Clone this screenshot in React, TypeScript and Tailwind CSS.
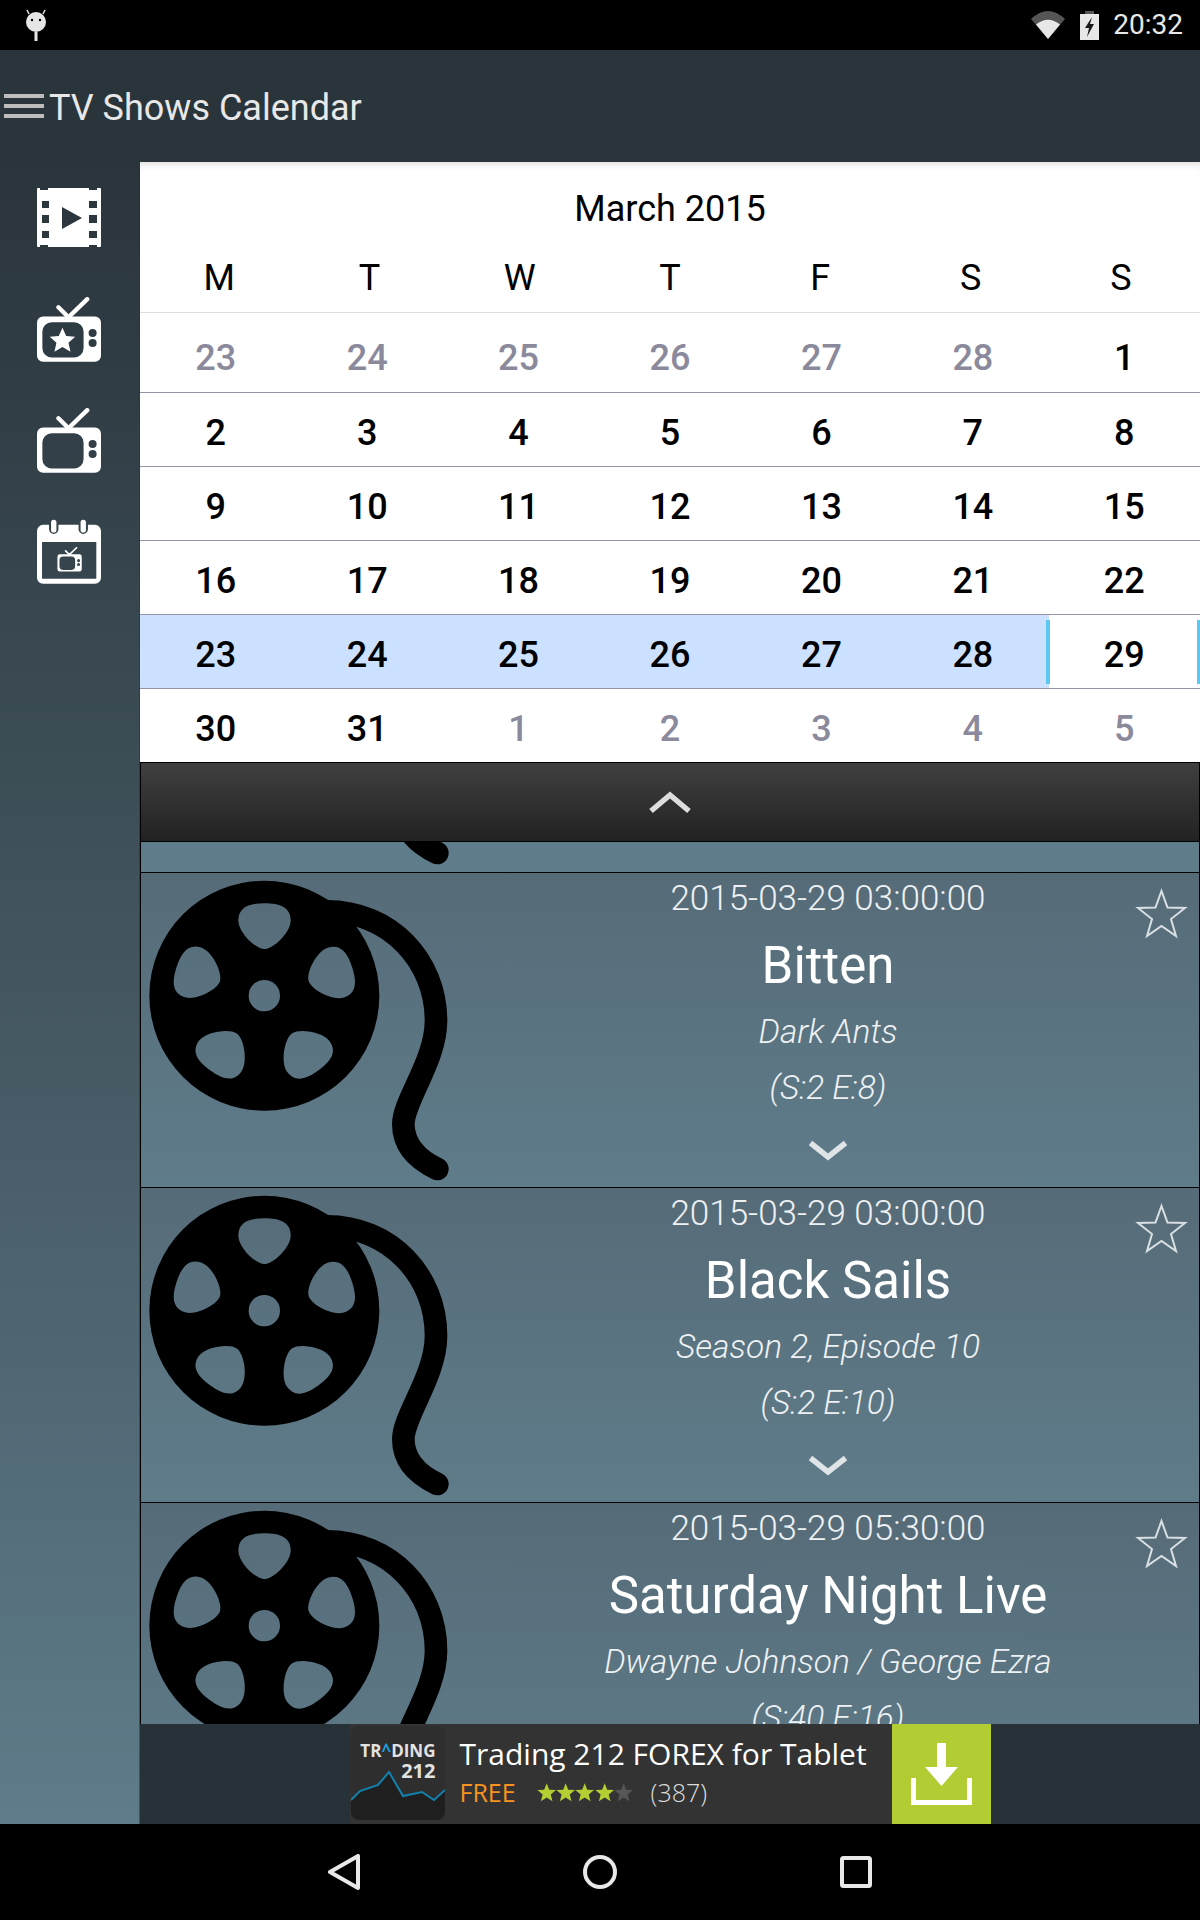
const tvBody =
  "M18 58H173a18 18 0 0 1 18 18V175a18 18 0 0 1-18 18H18a18 18 0 0 1-18-18V76a18 18 0 0 1 18-18Z";
const tvScreen =
  "M44 75H111a28 28 0 0 1 28 28V152a28 28 0 0 1-28 28H44a28 28 0 0 1-28-28V103a28 28 0 0 1 28-28Z";
const tvButtons = "M154 107a12 12 0 1 0 24 0a12 12 0 1 0-24 0ZM154 137a12 12 0 1 0 24 0a12 12 0 1 0-24 0Z";

const weekDays = ["M", "T", "W", "T", "F", "S", "S"];

const weeks = [
  [23, 24, 25, 26, 27, 28, 1],
  [2, 3, 4, 5, 6, 7, 8],
  [9, 10, 11, 12, 13, 14, 15],
  [16, 17, 18, 19, 20, 21, 22],
  [23, 24, 25, 26, 27, 28, 29],
  [30, 31, 1, 2, 3, 4, 5],
];

const shows = [
  { date: "2015-03-29 03:00:00", title: "Bitten", sub: "Dark Ants", ep: "(S:2 E:8)" },
  { date: "2015-03-29 03:00:00", title: "Black Sails", sub: "Season 2, Episode 10", ep: "(S:2 E:10)" },
  { date: "2015-03-29 05:30:00", title: "Saturday Night Live", sub: "Dwayne Johnson / George Ezra", ep: "(S:40 E:16)" },
];

function TvShape() {
  return (
    <>
      <path d={tvBody + tvScreen + tvButtons} fill="#fff" fillRule="evenodd" />
      <path d="M94 60L64 30M94 60L150 6" stroke="#fff" strokeWidth="13" strokeLinecap="round" fill="none" />
    </>
  );
}

function FilmIcon() {
  return (
    <svg width="64" height="59" viewBox="0 0 64 59">
      <path
        fillRule="evenodd"
        fill="#fff"
        d="M1 0H3V2H11V0H52V2H60V0H63Q64 0 64 1V58Q64 59 63 59H60V57H52V59H11V57H3V59H1Q0 59 0 58V1Q0 0 1 0ZM5 13V20H12V13ZM5 27V35H12V27ZM5 43V50H12V43ZM52 13V20H60V13ZM52 27V35H60V27ZM52 43V50H60V43ZM25 19V41L45 30Z"
      />
    </svg>
  );
}

function TvStarIcon() {
  return (
    <svg width="64" height="65" viewBox="0 0 191 193">
      <TvShape />
      <polygon
        fill="#fff"
        points="76,91 87,116 114,118 94,136 100,163 76,149 52,163 58,136 38,118 65,116"
      />
    </svg>
  );
}

function TvIcon() {
  return (
    <svg width="64" height="65" viewBox="0 0 191 193">
      <TvShape />
    </svg>
  );
}

function CalendarTvIcon() {
  return (
    <svg width="64" height="65" viewBox="0 0 191 193">
      <path
        fillRule="evenodd"
        fill="#fff"
        d="M18 17H173a18 18 0 0 1 18 18V175a18 18 0 0 1-18 18H18a18 18 0 0 1-18-18V35a18 18 0 0 1 18-18ZM15 68V178H177V68ZM36 17V30a14 14 0 0 0 28 0V17ZM124 17V30a14 14 0 0 0 28 0V17Z"
      />
      <rect x="42" y="2" width="16" height="38" rx="8" fill="#fff" />
      <rect x="130" y="2" width="16" height="38" rx="8" fill="#fff" />
      <g transform="translate(61 83) scale(0.38)">
        <TvShape />
      </g>
    </svg>
  );
}

function Reel() {
  const hole =
    "M403 428C450 428 482 440 482 480C482 515 430 565 403 565C376 565 325 515 325 480C325 440 356 428 403 428Z";
  return (
    <svg width="320" height="315" viewBox="33 337 960 945" className="shrink-0">
      <mask id="reel-holes" maskUnits="userSpaceOnUse" x="33" y="337" width="960" height="945">
        <rect x="33" y="337" width="960" height="945" fill="#fff" />
        {[0, 72, 144, 216, 288].map((deg) => (
          <path key={deg} d={hole} fill="#000" transform={`rotate(${deg} 403 705)`} />
        ))}
        <circle cx="403" cy="705" r="47" fill="#000" />
      </mask>
      <circle cx="403" cy="705" r="345" fill="#000" mask="url(#reel-holes)" />
      <path
        d="M590 452C780 452 918 600 918 780C918 900 820 1020 820 1090C820 1160 870 1200 922 1225"
        fill="none"
        stroke="#000"
        strokeWidth="68"
        strokeLinecap="round"
      />
    </svg>
  );
}

function ShowRow({ show }: { show: (typeof shows)[number] }) {
  return (
    <div className="relative flex h-[315px] shrink-0 border-b border-black bg-gradient-to-b from-[#566b78] to-[#5f7c8a] text-white">
      <Reel />
      <div className="flex min-w-0 flex-1 flex-col items-center pt-[6px] pr-[4px]">
        <p className="h-[40px] text-[35px] leading-[40px] font-light whitespace-nowrap text-[#eef1f3]">{show.date}</p>
        <p className="mt-[17px] h-[60px] text-[51px] leading-[60px] whitespace-nowrap">{show.title}</p>
        <p className="mt-[16px] h-[40px] text-[33.5px] leading-[40px] font-light whitespace-nowrap text-[#eef1f3] italic">
          {show.sub}
        </p>
        <p className="mt-[16px] h-[40px] text-[33.5px] leading-[40px] font-light whitespace-nowrap text-[#eef1f3] italic">
          {show.ep}
        </p>
        <svg width="40" height="24" viewBox="0 0 40 24" className="mt-[31px]">
          <path d="M2.5 4L20 18L37.5 4" fill="none" stroke="#dfe4e7" strokeWidth="5.5" />
        </svg>
      </div>
      <svg width="53" height="51" viewBox="0 0 53 51" className="absolute top-[15px] right-[11px]">
        <polygon
          points="26.5,3 32.5,19.5 50,20 36,31 41,48 26.5,38 12,48 17,31 3,20 20.5,19.5"
          fill="none"
          stroke="#d9e0e4"
          strokeWidth="2"
        />
      </svg>
    </div>
  );
}

function AdLogo() {
  return (
    <div className="relative my-[2px] ml-px h-[94px] w-[94px] shrink-0 overflow-hidden rounded-lg bg-[#2e2e2e]">
      <svg width="94" height="94" viewBox="0 0 94 94" className="absolute inset-0">
        <path d="M0 74L9 65L27 59L38 46L52 70L71 66L83 74L94 64V94H0Z" fill="#1f1f1f" />
        <path d="M0 74L9 65L27 59L38 46L52 70L71 66L83 74L94 64" fill="none" stroke="#1280ad" strokeWidth="2" />
      </svg>
      <p className="absolute top-[17px] right-[9px] text-[17px] leading-[16px] font-bold whitespace-nowrap text-[#e2e2e2]">
        TR<span className="text-[#1a9fd8]">^</span>DING
      </p>
      <p className="absolute top-[36px] right-[9px] text-[20px] leading-[18px] font-bold text-[#e2e2e2]">212</p>
    </div>
  );
}

function AdStars() {
  return (
    <div className="flex">
      {[0, 1, 2, 3, 4].map((i) => (
        <svg key={i} width="19.4" height="19" viewBox="0 0 20 19">
          <polygon
            points="10,0 12.6,6.6 19.6,7 14.2,11.5 16,18.5 10,14.7 4,18.5 5.8,11.5 0.4,7 7.4,6.6"
            fill={i < 4 ? "#b4cf33" : "#565656"}
          />
        </svg>
      ))}
    </div>
  );
}

export default function App() {
  return (
    <div className="flex h-[1920px] w-[1200px] flex-col overflow-hidden bg-black font-[Roboto,sans-serif]">
      {/* status bar */}
      <div className="flex h-[50px] shrink-0 items-center justify-between bg-black pr-[17px] pl-[25px]">
        <svg width="22" height="32" viewBox="0 0 22 32">
          <circle cx="11" cy="13" r="10" fill="#e6e6e6" />
          <path d="M4 5L2 1M18 5L20 1" stroke="#e6e6e6" strokeWidth="1.5" />
          <circle cx="7" cy="11" r="1.2" fill="#000" />
          <circle cx="15" cy="11" r="1.2" fill="#000" />
          <rect x="9.5" y="23" width="3" height="9" fill="#e6e6e6" />
        </svg>
        <div className="flex items-center">
          <svg width="34" height="28" viewBox="0 0 34 28">
            <path d="M17 28L0 8Q17 -8 34 8Z" fill="#555" />
            <path d="M17 28L5 13.5Q17 4 29 13.5Z" fill="#e8e8e8" />
          </svg>
          <svg width="19" height="29" viewBox="0 0 19 29" className="ml-[15px]">
            <path d="M5 0H14V3H19V29H0V3H5Z" fill="#e8e8e8" />
            <path d="M5 0H14V3H5Z" fill="#555" />
            <path d="M12 6L5 17H9L7 26L14 13H10Z" fill="#1a1a1a" />
          </svg>
          <span className="ml-[14px] text-[28px] leading-none text-[#e8e8e8]">20:32</span>
        </div>
      </div>

      {/* app bar */}
      <div className="flex h-[112px] shrink-0 items-center bg-[#2a343b] pl-[4px]">
        <div className="flex w-[40px] flex-col gap-[6px]">
          <div className="h-[4px] bg-[#bdbdbd]" />
          <div className="h-[4px] bg-[#bdbdbd]" />
          <div className="h-[4px] bg-[#bdbdbd]" />
        </div>
        <h1 className="ml-[5px] pt-[4px] text-[36px] leading-none font-normal text-[#e8e8e8]">TV Shows Calendar</h1>
      </div>

      <div className="flex min-h-0 flex-1">
        {/* side menu */}
        <aside className="flex w-[140px] shrink-0 flex-col items-center gap-[46px] border-r border-[#26303680] bg-gradient-to-b from-[#2a343b] to-[#5f7c8a] pt-[26px] pr-[2px]">
          <FilmIcon />
          <div className="mt-[4px]">
            <TvStarIcon />
          </div>
          <TvIcon />
          <CalendarTvIcon />
        </aside>

        <main className="flex min-w-0 flex-1 flex-col">
          {/* calendar */}
          <section className="h-[600px] shrink-0 bg-white text-black shadow-[inset_0_8px_8px_-7px_rgba(0,0,0,0.18)]">
            <p className="h-[94px] pt-[27px] text-center text-[36px] leading-[40px]">March 2015</p>
            <div className="grid h-[57px] grid-cols-7 border-b border-[#dddddd] px-[4px]">
              {weekDays.map((d, i) => (
                <span key={i} className="text-center text-[36px] leading-[44px]">
                  {d}
                </span>
              ))}
            </div>
            {weeks.map((week, w) => (
              <div
                key={w}
                className={
                  w === 0
                    ? "grid h-[79px] grid-cols-7"
                    : "grid h-[74px] grid-cols-7 border-t border-[#9593a5]"
                }
              >
                {week.map((day, i) => {
                  const muted = (w === 0 && i < 6) || (w === 5 && i > 1);
                  const selected = w === 4 && i < 6;
                  const today = w === 4 && i === 6;
                  return (
                    <div
                      key={i}
                      className={
                        "relative flex items-center justify-center text-[36px] leading-none font-medium " +
                        (w === 0 ? "pt-[10px] " : "pt-[6px] ") +
                        (muted ? "text-[#8b899c] " : "text-black ") +
                        (selected ? "bg-[#cce0ff] " : "")
                      }
                    >
                      {day}
                      {today && (
                        <>
                          <div className="absolute top-[5px] bottom-[4px] -left-[3px] w-[4px] bg-[#5ac8f0]" />
                          <div className="absolute top-[5px] right-0 bottom-[4px] w-[3px] bg-[#5ac8f0]" />
                        </>
                      )}
                    </div>
                  );
                })}
              </div>
            ))}
          </section>

          {/* collapse handle */}
          <div className="flex h-[80px] shrink-0 items-center justify-center border border-black bg-gradient-to-b from-[#404040] to-[#222222]">
            <svg width="44" height="24" viewBox="0 0 44 24">
              <path d="M3 21L22 5L41 21" fill="none" stroke="#dddddd" strokeWidth="5.5" />
            </svg>
          </div>

          {/* episodes, scrolled so only the tail of the previous row shows */}
          <div className="flex min-h-0 flex-1 flex-col overflow-hidden border-x border-black">
            <div className="flex h-[31px] shrink-0 items-end overflow-hidden border-b border-black bg-[#5f7c8a]">
              <div className="shrink-0">
                <Reel />
              </div>
            </div>
            {shows.map((show, i) => (
              <ShowRow key={i} show={show} />
            ))}
          </div>

          {/* ad */}
          <div className="flex h-[100px] shrink-0 justify-center bg-[#263238]">
            <div className="flex w-[641px] bg-[#333333] font-['Open_Sans',sans-serif]">
              <AdLogo />
              <div className="ml-[15px] min-w-0 flex-1">
                <p className="mt-[10px] text-[30px] leading-[40px] whitespace-nowrap text-white">
                  Trading 212 FOREX for Tablet
                </p>
                <div className="mt-[1px] flex items-center">
                  <span className="text-[25px] leading-[34px] text-[#f7931e]">FREE</span>
                  <div className="ml-[21px]">
                    <AdStars />
                  </div>
                  <span className="ml-[17px] text-[25px] leading-[34px] font-light text-[#dddddd]">(387)</span>
                </div>
              </div>
              <div className="flex w-[99px] shrink-0 items-center justify-center bg-[#b2cd33]">
                <svg width="61" height="62" viewBox="0 0 61 62">
                  <path d="M26 0H35V24H47L30.5 43L14 24H26Z" fill="#fff" />
                  <path d="M2.5 35V59.5H58.5V35" fill="none" stroke="#fff" strokeWidth="5" />
                </svg>
              </div>
            </div>
          </div>
        </main>
      </div>

      {/* nav bar */}
      <div className="flex h-[96px] shrink-0 items-center justify-center gap-[223px] bg-black">
        <svg width="32" height="36" viewBox="0 0 32 36">
          <path d="M30 2V34L2 18Z" fill="none" stroke="#e8e8e8" strokeWidth="4" strokeLinejoin="round" />
        </svg>
        <svg width="34" height="34" viewBox="0 0 34 34">
          <circle cx="17" cy="17" r="15" fill="none" stroke="#e8e8e8" strokeWidth="4" />
        </svg>
        <svg width="32" height="32" viewBox="0 0 32 32">
          <rect x="2" y="2" width="28" height="28" rx="1.5" fill="none" stroke="#e8e8e8" strokeWidth="4" />
        </svg>
      </div>
    </div>
  );
}
